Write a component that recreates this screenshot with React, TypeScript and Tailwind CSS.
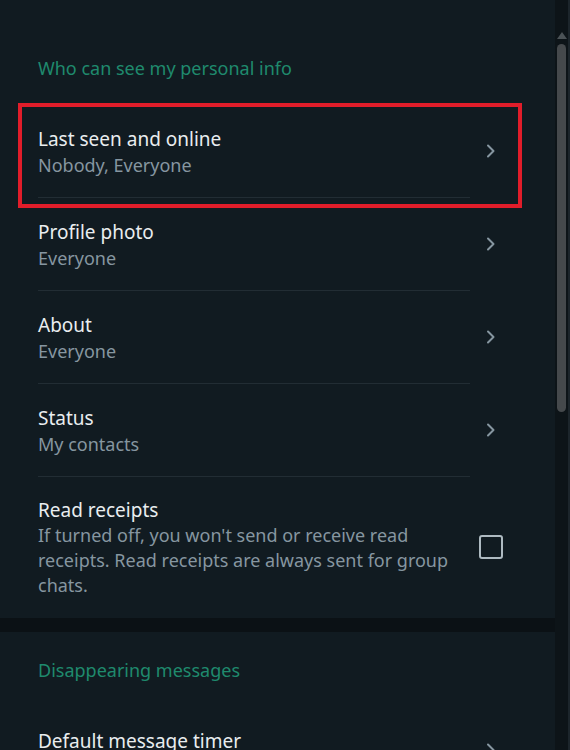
import React from "react";

const Chevron = () => (
  <svg width="12" height="16" viewBox="0 0 12 16" fill="none">
    <path d="M3 2.5 L8.5 8 L3 13.5" stroke="#8696a0" strokeWidth="2" strokeLinecap="round" strokeLinejoin="round" />
  </svg>
);

type RowProps = { title: string; sub: string };

const Row = ({ title, sub }: RowProps) => (
  <div className="flex pl-[38px]">
    <div className="w-[432px] pt-[21px] pb-[19px] border-b border-[#222d34]">
      <div className="text-[19px] leading-[26px] text-[#e9edef]">{title}</div>
      <div className="text-[18px] leading-[26px] text-[#8696a0]">{sub}</div>
    </div>
    <div className="w-[42px] flex items-center justify-center pb-[2px]">
      <Chevron />
    </div>
  </div>
);

export default function App() {
  return (
    <div
      className="w-[570px] h-[750px] overflow-hidden flex bg-[#0c1317]"
      style={{ fontFamily: '"Noto Sans", "Open Sans", sans-serif' }}
    >
      <div className="w-[555px] flex flex-col relative">
        <div className="bg-[#111b21] h-[618px] shrink-0">
          <div className="pl-[38px] pt-[55px] h-[105px] text-[18px] leading-[26px] text-[#1f8a6d]">
            Who can see my personal info
          </div>
          <Row title="Last seen and online" sub="Nobody, Everyone" />
          <Row title="Profile photo" sub="Everyone" />
          <Row title="About" sub="Everyone" />
          <Row title="Status" sub="My contacts" />
          <div className="flex pl-[38px] pt-[20px]">
            <div className="w-[432px]">
              <div className="text-[19px] leading-[26px] text-[#e9edef]">Read receipts</div>
              <div className="text-[18px] leading-[25px] text-[#8696a0]">
                If turned off, you won't send or receive read receipts. Read receipts are always sent for group chats.
              </div>
            </div>
            <div className="w-[42px] flex justify-center pt-[38px]">
              <div className="w-[24px] h-[24px] rounded-[3px] border-2 border-[#aebac1]" />
            </div>
          </div>
        </div>
        <div className="h-[14px] shrink-0 bg-[#0b1115]" />
        <div className="bg-[#111b21] flex-1">
          <div className="pl-[38px] pt-[25px] h-[96px] text-[18px] leading-[26px] text-[#1f8a6d]">
            Disappearing messages
          </div>
          <div className="flex pl-[38px]">
            <div className="w-[432px]">
              <div className="text-[19px] leading-[26px] text-[#e9edef]">Default message timer</div>
            </div>
            <div className="w-[42px] flex justify-center pt-[14px]">
              <Chevron />
            </div>
          </div>
        </div>
        <div className="absolute left-[18px] top-[103px] w-[504px] h-[105px] border-[4px] border-[#e11d2a] pointer-events-none" />
      </div>
      <div className="w-[15px] flex flex-col items-center bg-[#0d1418] border-r-[2px] border-[#1c252b]">
        <div className="mt-[32px] w-0 h-0 border-l-[5px] border-r-[5px] border-b-[7px] border-l-transparent border-r-transparent border-b-[#4b5256]" />
        <div className="mt-[5px] w-[9px] h-[368px] rounded-full bg-[#45494c]" />
      </div>
    </div>
  );
}
